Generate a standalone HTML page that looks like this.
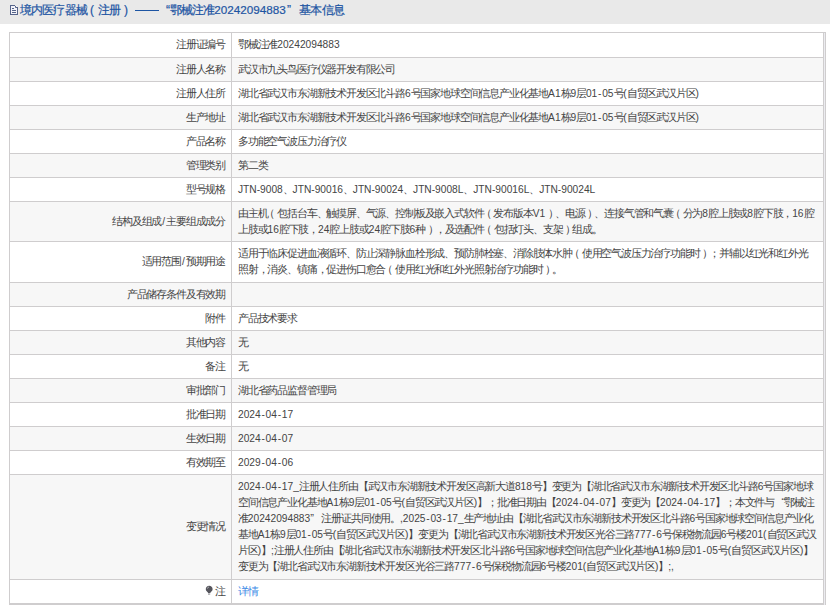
<!DOCTYPE html>
<html><head><meta charset="utf-8"><style>
html,body{margin:0;padding:0;background:#fff;width:830px;height:610px;overflow:hidden;position:relative;font-family:"Liberation Sans",sans-serif;}
.hdr{position:absolute;left:0;top:0;width:830px;height:24px;background:#e9e9e9;}
.t{position:absolute;top:0px;font-size:12px;line-height:20px;color:#1d55a3;white-space:nowrap;-webkit-text-stroke:0.2px #1d55a3;}
.tl{font-size:12px;}
.ico{position:absolute;left:10px;top:5px;width:9px;height:10px;}
.r{position:absolute;left:10px;width:813px;}
.lab{position:absolute;left:0;width:215px;text-align:right;font-size:11px;letter-spacing:-1.18px;line-height:16px;color:#444;white-space:nowrap;}
.val{position:absolute;left:228px;font-size:11px;letter-spacing:-1.18px;line-height:16px;color:#444;white-space:nowrap;}
.l{font-size:10.2px;letter-spacing:0;}
.ln{height:16px;}
.sl{margin:0 1px;}
.ql{margin-left:7.3px;} .qr{margin-right:8.8px;}
.hy{margin:0 0.75px;} .pl{position:relative;left:-3px;} .pr{position:relative;left:2.5px;}
.link{color:#3b8ae6;}
.hl{position:absolute;left:9px;width:815px;height:1px;background:#cfcdce;}
.vl{position:absolute;top:32px;width:1px;height:573px;background:#cfcdce;}
.pin{display:inline-block;width:5px;height:5px;border-radius:50% 50% 50% 0;transform:rotate(-45deg);background:#555;margin-right:2px;vertical-align:1px;}
</style></head><body>
<div class="hdr"><svg style="position:absolute;left:0;top:0" width="24" height="20" shape-rendering="crispEdges"><rect x="11" y="6" width="6" height="8" fill="#f3f3f9"/><g fill="#56648a"><rect x="10" y="5" width="1" height="10"/><rect x="10" y="5" width="5" height="1"/><rect x="15" y="6" width="1" height="1"/><rect x="16" y="7" width="1" height="1"/><rect x="17" y="7" width="1" height="8"/><rect x="10" y="14" width="8" height="1"/><rect x="15" y="7" width="1" height="1" opacity="0.8"/><rect x="12" y="8" width="2" height="1"/><rect x="12" y="10" width="4" height="1"/><rect x="12" y="12" width="4" height="1"/></g></svg>
<span class="t" style="left:19.5px;letter-spacing:-0.7px">境内医疗器械</span>
<span class="t tl" style="left:90px">(</span>
<span class="t" style="left:97.5px;letter-spacing:-0.7px">注册</span>
<span class="t tl" style="left:124px">)</span>
<div style="position:absolute;left:135px;top:10px;width:24px;height:1px;background:#1d55a3"></div>
<span class="t tl" style="left:166px">&#8220;</span>
<span class="t" style="left:170.3px;letter-spacing:-1.1px">鄂械注准</span>
<span class="t tl" style="left:214.3px;font-size:11.7px">20242094883</span>
<span class="t tl" style="left:287px">&#8221;</span>
<span class="t" style="left:298.8px;letter-spacing:-0.6px">基本信息</span>
</div>
<div class="r" style="top:33px;height:24px;background:#fff"><div class="lab" style="top:3.0px">注册证编号</div><div class="val" style="top:3.0px"><div class=ln>鄂械注准<span class="l">20242094883</span></div></div></div>
<div class="hl" style="top:32px"></div>
<div class="r" style="top:58px;height:23px;background:#f7f7f7"><div class="lab" style="top:2.5px">注册人名称</div><div class="val" style="top:2.5px"><div class=ln>武汉市九头鸟医疗仪器开发有限公司</div></div></div>
<div class="hl" style="top:57px"></div>
<div class="r" style="top:82px;height:23px;background:#fff"><div class="lab" style="top:2.5px">注册人住所</div><div class="val" style="top:2.5px"><div class=ln>湖北省武汉市东湖新技术开发区北斗路<span class="l">6</span>号国家地球空间信息产业化基地<span class="l">A1</span>栋<span class="l">9</span>层<span class="l">01<span class="hy">-</span>05</span>号<span class="l">(</span>自贸区武汉片区<span class="l">)</span></div></div></div>
<div class="hl" style="top:81px"></div>
<div class="r" style="top:106px;height:23px;background:#f7f7f7"><div class="lab" style="top:2.5px">生产地址</div><div class="val" style="top:2.5px"><div class=ln>湖北省武汉市东湖新技术开发区北斗路<span class="l">6</span>号国家地球空间信息产业化基地<span class="l">A1</span>栋<span class="l">9</span>层<span class="l">01<span class="hy">-</span>05</span>号<span class="l">(</span>自贸区武汉片区<span class="l">)</span></div></div></div>
<div class="hl" style="top:105px"></div>
<div class="r" style="top:130px;height:23px;background:#fff"><div class="lab" style="top:2.5px">产品名称</div><div class="val" style="top:2.5px"><div class=ln>多功能空气波压力治疗仪</div></div></div>
<div class="hl" style="top:129px"></div>
<div class="r" style="top:154px;height:23px;background:#f7f7f7"><div class="lab" style="top:2.5px">管理类别</div><div class="val" style="top:2.5px"><div class=ln>第二类</div></div></div>
<div class="hl" style="top:153px"></div>
<div class="r" style="top:178px;height:23px;background:#fff"><div class="lab" style="top:2.5px">型号规格</div><div class="val" style="top:2.5px"><div class=ln><span class="l">JTN-9008</span>、<span class="l">JTN-90016</span>、<span class="l">JTN-90024</span>、<span class="l">JTN-9008L</span>、<span class="l">JTN-90016L</span>、<span class="l">JTN-90024L</span></div></div></div>
<div class="hl" style="top:177px"></div>
<div class="r" style="top:202px;height:39px;background:#f7f7f7"><div class="lab" style="top:10.5px">结构及组成<span class="l sl">/</span>主要组成成分</div><div class="val" style="top:2.5px"><div class=ln>由主机<span class="pl">（</span>包括台车、触摸屏、气源、控制板及嵌入式软件<span class="pl">（</span>发布版本<span class="l">V1</span><span class="pr">）</span>、电源<span class="pr">）</span>、连接气管和气囊<span class="pl">（</span>分为<span class="l">8</span>腔上肢或<span class="l">8</span>腔下肢，<span class="l">16</span>腔</div><div class=ln>上肢或<span class="l">16</span>腔下肢，<span class="l">24</span>腔上肢或<span class="l">24</span>腔下肢<span class="l">6</span>种<span class="pr">）</span>，及选配件<span class="pl">（</span>包括灯头、支架<span class="pr">）</span>组成。</div></div></div>
<div class="hl" style="top:201px"></div>
<div class="r" style="top:242px;height:40px;background:#fff"><div class="lab" style="top:11.0px">适用范围<span class="l sl">/</span>预期用途</div><div class="val" style="top:3.0px"><div class=ln>适用于临床促进血液循环、防止深静脉血栓形成、预防肺栓塞、消除肢体水肿<span class="pl">（</span>使用空气波压力治疗功能时<span class="pr">）</span>；并辅以红光和红外光</div><div class=ln>照射，消炎、镇痛，促进伤口愈合<span class="pl">（</span>使用红光和红外光照射治疗功能时<span class="pr">）</span>。</div></div></div>
<div class="hl" style="top:241px"></div>
<div class="r" style="top:283px;height:23px;background:#f7f7f7"><div class="lab" style="top:2.5px">产品储存条件及有效期</div><div class="val" style="top:2.5px"></div></div>
<div class="hl" style="top:282px"></div>
<div class="r" style="top:307px;height:23px;background:#fff"><div class="lab" style="top:2.5px">附件</div><div class="val" style="top:2.5px"><div class=ln>产品技术要求</div></div></div>
<div class="hl" style="top:306px"></div>
<div class="r" style="top:331px;height:23px;background:#f7f7f7"><div class="lab" style="top:2.5px">其他内容</div><div class="val" style="top:2.5px"><div class=ln>无</div></div></div>
<div class="hl" style="top:330px"></div>
<div class="r" style="top:355px;height:23px;background:#fff"><div class="lab" style="top:2.5px">备注</div><div class="val" style="top:2.5px"><div class=ln>无</div></div></div>
<div class="hl" style="top:354px"></div>
<div class="r" style="top:379px;height:23px;background:#f7f7f7"><div class="lab" style="top:2.5px">审批部门</div><div class="val" style="top:2.5px"><div class=ln>湖北省药品监督管理局</div></div></div>
<div class="hl" style="top:378px"></div>
<div class="r" style="top:403px;height:23px;background:#fff"><div class="lab" style="top:2.5px">批准日期</div><div class="val" style="top:2.5px"><div class=ln><span class="l">2024<span class="hy">-</span>04<span class="hy">-</span>17</span></div></div></div>
<div class="hl" style="top:402px"></div>
<div class="r" style="top:427px;height:23px;background:#f7f7f7"><div class="lab" style="top:2.5px">生效日期</div><div class="val" style="top:2.5px"><div class=ln><span class="l">2024<span class="hy">-</span>04<span class="hy">-</span>07</span></div></div></div>
<div class="hl" style="top:426px"></div>
<div class="r" style="top:451px;height:23px;background:#fff"><div class="lab" style="top:2.5px">有效期至</div><div class="val" style="top:2.5px"><div class=ln><span class="l">2029<span class="hy">-</span>04<span class="hy">-</span>06</span></div></div></div>
<div class="hl" style="top:450px"></div>
<div class="r" style="top:475px;height:104px;background:#f7f7f7"><div class="lab" style="top:43.0px">变更情况</div><div class="val" style="top:3.0px"><div class=ln><span class="l">2024<span class="hy">-</span>04<span class="hy">-</span>17_</span>注册人住所由【武汉市东湖新技术开发区高新大道<span class="l">818</span>号】变更为【湖北省武汉市东湖新技术开发区北斗路<span class="l">6</span>号国家地球</div><div class=ln>空间信息产业化基地<span class="l">A1</span>栋<span class="l">9</span>层<span class="l">01<span class="hy">-</span>05</span>号<span class="l">(</span>自贸区武汉片区<span class="l">)</span>】；批准日期由【<span class="l">2024<span class="hy">-</span>04<span class="hy">-</span>07</span>】变更为【<span class="l">2024<span class="hy">-</span>04<span class="hy">-</span>17</span>】；本文件与<span class="ql">“</span>鄂械注</div><div class=ln>准<span class="l">20242094883</span><span class="qr">”</span>注册证共同使用。<span class="l">,2025<span class="hy">-</span>03<span class="hy">-</span>17_</span>生产地址由【湖北省武汉市东湖新技术开发区北斗路<span class="l">6</span>号国家地球空间信息产业化</div><div class=ln>基地<span class="l">A1</span>栋<span class="l">9</span>层<span class="l">01<span class="hy">-</span>05</span>号<span class="l">(</span>自贸区武汉片区<span class="l">)</span>】变更为【湖北省武汉市东湖新技术开发区光谷三路<span class="l">777<span class="hy">-</span>6</span>号保税物流园<span class="l">6</span>号楼<span class="l">201(</span>自贸区武汉</div><div class=ln>片区<span class="l">)</span>】<span class="l">;</span>注册人住所由【湖北省武汉市东湖新技术开发区北斗路<span class="l">6</span>号国家地球空间信息产业化基地<span class="l">A1</span>栋<span class="l">9</span>层<span class="l">01<span class="hy">-</span>05</span>号<span class="l">(</span>自贸区武汉片区<span class="l">)</span>】</div><div class=ln>变更为【湖北省武汉市东湖新技术开发区光谷三路<span class="l">777<span class="hy">-</span>6</span>号保税物流园<span class="l">6</span>号楼<span class="l">201(</span>自贸区武汉片区<span class="l">)</span>】<span class="l">;,</span></div></div></div>
<div class="hl" style="top:474px"></div>
<div class="r" style="top:580px;height:23px;background:#fff"><div class="lab" style="top:2.5px">注</div><div class="val link" style="top:2.5px"><div class=ln>详情</div></div></div>
<div class="hl" style="top:579px"></div>
<div class="hl" style="top:603px;height:2px"></div>
<svg style="position:absolute;left:200px;top:582px" width="20" height="18"><path d="M9.2 3.7C7.3 3.7 5.8 5.2 5.8 7.1C5.8 8.4 6.5 9.3 7.4 9.9C7.9 10.3 8.1 10.7 8.1 11.1H10.3C10.3 10.7 10.5 10.3 11 9.9C11.9 9.3 12.6 8.4 12.6 7.1C12.6 5.2 11.1 3.7 9.2 3.7Z" fill="#55555c"/><path d="M7.4 6.6C7.5 5.7 8.1 5.1 8.9 5" stroke="#c8c8cc" stroke-width="0.8" fill="none"/><rect x="8" y="11.5" width="2.2" height="1.1" fill="#8a8a90"/></svg>
<div class="vl" style="left:9px"></div>
<div class="vl" style="left:231px"></div>
<div class="vl" style="left:823px"></div>
<div class="vl" style="left:824px;top:33px;height:572px;background:#ececf0"></div>
<div class="hl" style="top:32px;width:817px"></div>
<div class="vl" style="left:825px"></div>
</body></html>
